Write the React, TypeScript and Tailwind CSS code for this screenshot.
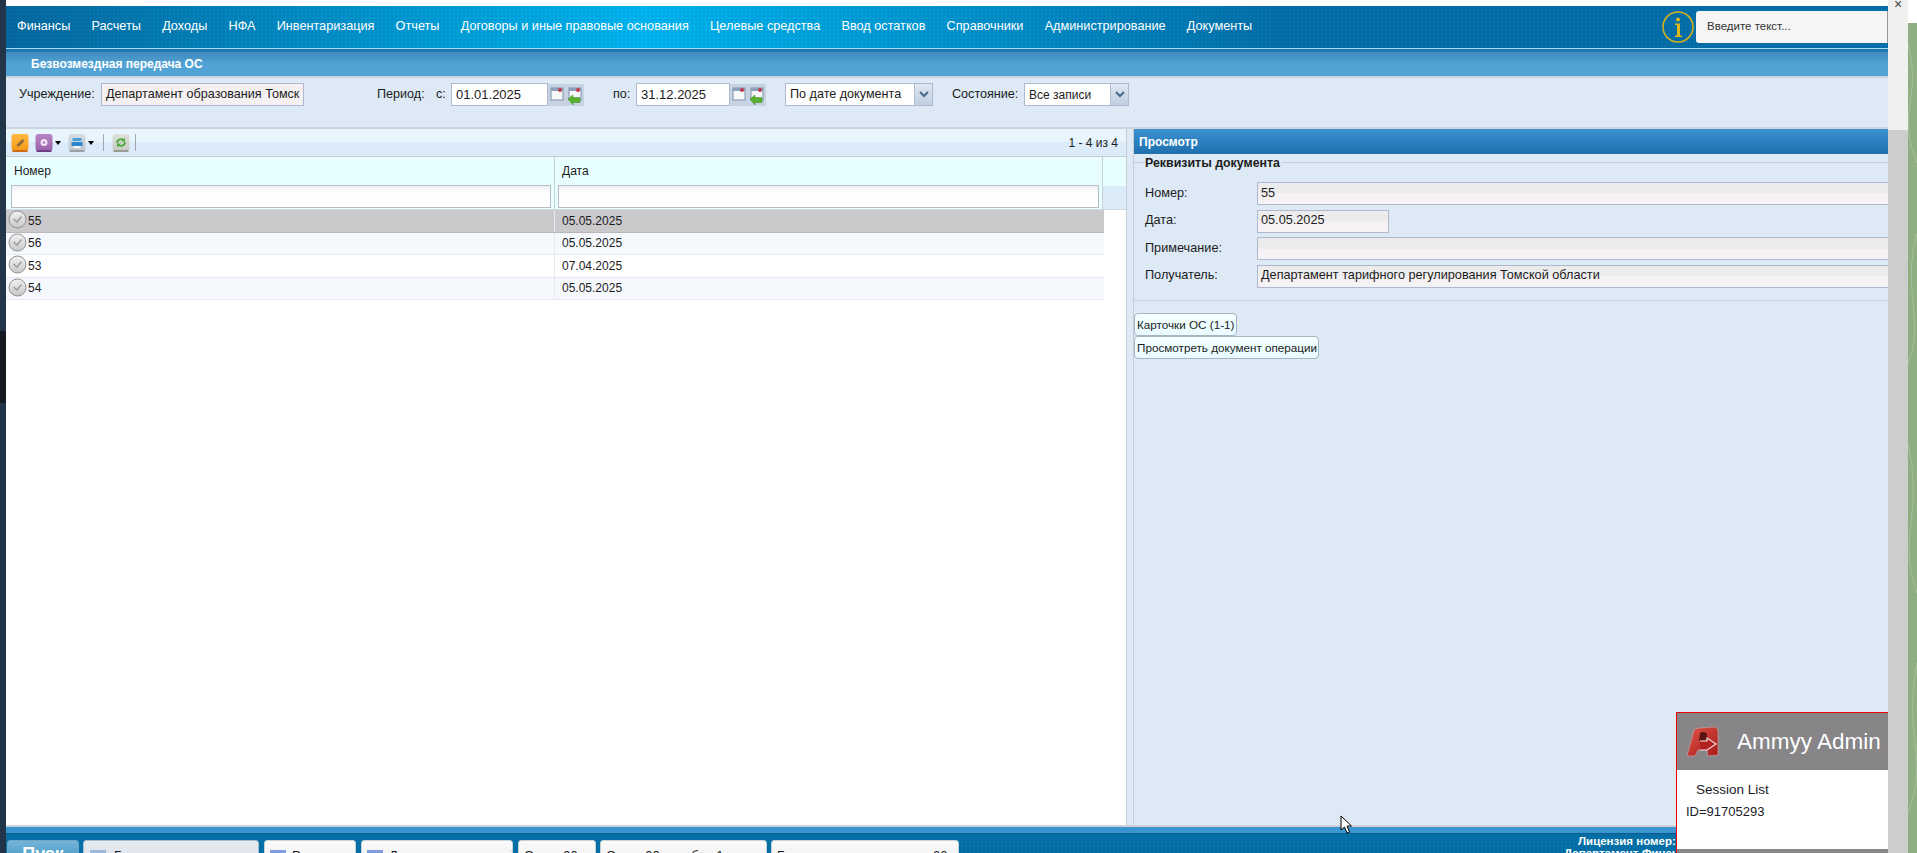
import React from 'react';

const menuItems = ['Финансы', 'Расчеты', 'Доходы', 'НФА', 'Инвентаризация', 'Отчеты', 'Договоры и иные правовые основания', 'Целевые средства', 'Ввод остатков', 'Справочники', 'Администрирование', 'Документы'];

const rows = [
  { num: '55', date: '05.05.2025', cls: 'bg-[#cbc9cc] border-[#b9b7ba]' },
  { num: '56', date: '05.05.2025', cls: 'bg-[#f5f8fd] border-[#e6eaf0]' },
  { num: '53', date: '07.04.2025', cls: 'bg-white border-[#e6eaf0]' },
  { num: '54', date: '05.05.2025', cls: 'bg-[#f5f8fd] border-[#e6eaf0]' },
];

// Small calendar button, optionally with the green arrow
const CalendarIcon = ({ arrow }: { arrow?: boolean }) => (
  <svg width="18" height="22" viewBox="0 0 18 22" className="shrink-0">
    <rect width="18" height="22" fill="#c6d3e2" />
    <rect x="3" y="4" width="12" height="12" fill="#f6f8fb" stroke="#7e90aa" />
    <rect x="3" y="4" width="12" height="3" fill="#8aa0bd" />
    <circle cx="12" cy="6" r="2" fill="#c0394a" />
    {arrow && <path d="M2 15l5-4v2.500h7v5H7V21z" fill="#58b030" stroke="#3f8a20" strokeWidth="0.5" />}
  </svg>
);

const ComboArrow = () => (
  <span className="w-[18px] h-full shrink-0 bg-gradient-to-b from-[#dfe8f2] to-[#c0cfe0] border-l border-[#b0bccf] flex items-center justify-center">
    <svg width="10" height="7" viewBox="0 0 10 7"><path d="M1 1l4 4 4-4" fill="none" stroke="#4a6a8a" strokeWidth="2" /></svg>
  </span>
);

const RowCheck = () => (
  <svg width="19" height="19" viewBox="0 0 19 19" className="shrink-0 -mt-[2px]">
    <defs>
      <linearGradient id="rowcheck" x1="0" y1="0" x2="0" y2="1">
        <stop offset="0" stopColor="#f2f2f2" />
        <stop offset="1" stopColor="#c8c8c8" />
      </linearGradient>
    </defs>
    <circle cx="9.500" cy="9.500" r="8.500" fill="url(#rowcheck)" stroke="#8e8e8e" />
    <path d="M5.500 9l3.500 3L13.500 6.500" fill="none" stroke="#a0a0a0" strokeWidth="1.600" />
  </svg>
);

const ToolBtn = ({ from, to, edge, children }: { from: string; to: string; edge: string; children: React.ReactNode }) => (
  <svg width="18" height="18" viewBox="0 0 17 18" className="shrink-0">
    <defs>
      <linearGradient id={from} x1="0" y1="0" x2="0" y2="1">
        <stop offset="0" stopColor={from} />
        <stop offset="1" stopColor={to} />
      </linearGradient>
    </defs>
    <rect x="0" y="0" width="17" height="17" rx="3" fill={`url(#${from})`} />
    <rect x="1" y="16" width="15" height="2" fill={edge} />
    {children}
  </svg>
);

const DropCaret = () => <span className="w-0 h-0 ml-[2px] border-x-[3px] border-x-transparent border-t-[4px] border-t-black" />;

const Field = ({ label, value, className }: { label: string; value?: string; className: string }) => (
  <div className="flex items-center text-[12.700px]">
    <span className="w-[123px] pl-[11px] shrink-0">{label}</span>
    <div className={`h-[23px] pl-[3px] flex items-center border border-[#b0b8d0] bg-gradient-to-b from-[#ececec] from-50% to-[#f6f1f5] to-50% ${className}`}>{value}</div>
  </div>
);

export default function App() {
  return (
    <div className="w-[1917px] h-[853px] flex overflow-hidden relative font-['Liberation_Sans',sans-serif] text-[12px] text-[#1c1c1c] bg-white">
      <div className="w-[6px] shrink-0 flex flex-col">
        <div className="h-[331px] bg-[#223549]" />
        <div className="h-[72px] bg-[#15191f]" />
        <div className="flex-1 bg-[#22344a]" />
      </div>

      <div className="w-[1882px] shrink-0 flex flex-col">
        <div className="h-[6px] bg-white" />

        {/* top menu */}
        <div className="h-[42px] flex items-center bg-[radial-gradient(rgba(0,40,80,0.10)_1px,transparent_1px),linear-gradient(90deg,#05699f,#00b5f0_34%,#046fa8_68%)] bg-[length:4px_4px,auto] text-white text-[12.700px]">
          <div className="flex items-center gap-[21.200px] pl-[11px]">
            {menuItems.map((m) => <span key={m} className="whitespace-nowrap">{m}</span>)}
          </div>
          <div className="ml-auto flex items-center">
            <svg width="32" height="32" viewBox="0 0 32 32" className="shrink-0">
              <circle cx="16" cy="16" r="15" fill="none" stroke="#d8b21a" strokeWidth="1.500" />
              <circle cx="16" cy="8.500" r="2" fill="#e0b818" />
              <path d="M13 12.500h5v12h2v1.500h-7v-1.500h2v-10.500h-2z" fill="#e0b818" />
            </svg>
            <div className="w-[192px] h-[32px] ml-[2px] bg-[#f5f5f5] rounded-l-[3px] flex items-center pl-[11px] text-[#333] text-[11.500px] border-r border-[#999]">Введите текст...</div>
          </div>
        </div>
        <div className="h-[1px] bg-[#a8d8f0]" />
        <div className="h-[3px] bg-[#1f78b0]" />

        {/* page title */}
        <div className="h-[24px] pl-[25px] flex items-center bg-gradient-to-b from-[#3f8abd] via-[#52a3d5] via-50% to-[#52a3d5] text-white font-bold text-[12px]">Безвозмездная передача ОС</div>
        <div className="h-[2px] bg-[#cfd4da]" />

        {/* filters */}
        <div className="h-[49px] bg-[#dde9f5] pt-[5px] flex items-start">
          <div className="h-[23px] flex items-center text-[12.600px]">
            <span className="ml-[13px] w-[82px]">Учреждение:</span>
            <div className="w-[203px] h-[23px] pl-[4px] flex items-center border border-[#b0b8d0] bg-[#f5f0f2] whitespace-nowrap overflow-hidden">Департамент образования Томск</div>
            <span className="ml-[73px] w-[59px]">Период:</span>
            <span className="w-[15px]">с:</span>
            <div className="w-[97px] h-[23px] pl-[4px] flex items-center bg-white border border-[#b0b8d0] text-[13px]">01.01.2025</div>
            <CalendarIcon />
            <CalendarIcon arrow />
            <span className="ml-[29px] w-[23px]">по:</span>
            <div className="w-[94px] h-[23px] pl-[4px] flex items-center bg-white border border-[#b0b8d0] text-[13px]">31.12.2025</div>
            <CalendarIcon />
            <CalendarIcon arrow />
            <div className="w-[148px] h-[23px] ml-[19px] pl-[4px] flex items-center justify-between bg-white border border-[#b0b8d0]">По дате документа<ComboArrow /></div>
            <span className="ml-[19px] w-[72px]">Состояние:</span>
            <div className="w-[105px] h-[23px] pl-[4px] flex items-center justify-between bg-white border border-[#b0b8d0] text-[12px]">Все записи<ComboArrow /></div>
          </div>
        </div>
        <div className="h-[2px] bg-[#cfd4da]" />

        <div className="flex-1 min-h-0 flex">
          {/* list */}
          <div className="w-[1120px] shrink-0 bg-white flex flex-col">
            <div className="h-[28px] flex items-center pl-[5px] pr-[8px] bg-gradient-to-b from-[#e9f5fd] from-50% to-[#dcebfa] to-50% border-b border-[#c6cdd6]">
              <ToolBtn from="#ffb83c" to="#f59a1c" edge="#d06a10"><path d="M5 11l6-6 2 2-6 6z" fill="#8a6a40" /></ToolBtn>
              <span className="ml-[6px] flex items-center">
                <ToolBtn from="#b884c4" to="#9a62aa" edge="#6e3a80"><circle cx="8.500" cy="8.500" r="3.500" fill="#f2e6f5" /><circle cx="8.500" cy="8.500" r="1.200" fill="#a870b8" /></ToolBtn>
                <DropCaret />
              </span>
              <span className="ml-[7px] flex items-center">
                <ToolBtn from="#d8dde2" to="#bfc6cc" edge="#9a9fa5"><rect x="4" y="4" width="9" height="3" fill="#4aa0dc" /><rect x="3" y="8" width="11" height="4" fill="#2a88d0" /><rect x="5" y="12" width="7" height="2" fill="#f4f8fb" /></ToolBtn>
                <DropCaret />
              </span>
              <span className="w-[1px] h-[17px] ml-[9px] bg-[#9fa8b0]" />
              <span className="ml-[8px] flex">
                <ToolBtn from="#dfe2dc" to="#c6cac3" edge="#9a9d96"><path d="M4.500 9a4 4 0 0 1 7-2.500M12.500 8a4 4 0 0 1-7 2.500" fill="none" stroke="#4aa838" strokeWidth="1.800" /><path d="M12.500 3.500v4h-4zM4.500 13.500v-4h4z" fill="#4aa838" /></ToolBtn>
              </span>
              <span className="w-[1px] h-[17px] ml-[5px] bg-[#9fa8b0]" />
              <span className="ml-auto">1 - 4 из 4</span>
            </div>

            <div className="flex h-[53px] bg-[#e8ffff] border-b border-[#d0d8e0]">
              <div className="w-[549px] shrink-0 border-r border-[#c8d0d8] flex flex-col">
                <div className="h-[28px] pl-[8px] flex items-center">Номер</div>
                <div className="mx-[5px] mr-[3px] h-[23px] border border-[#b8bcc4] bg-gradient-to-b from-[#eef2f6] to-white to-40%" />
              </div>
              <div className="w-[548px] shrink-0 border-r border-[#c8d0d8] flex flex-col">
                <div className="h-[28px] pl-[7px] flex items-center">Дата</div>
                <div className="mx-[3px] h-[23px] border border-[#b8bcc4] bg-gradient-to-b from-[#eef2f6] to-white to-40%" />
              </div>
              <div className="flex-1 bg-gradient-to-b from-[#e8ffff] from-55% to-[#dcebf8] to-55%" />
            </div>

            {rows.map((r) => (
              <div key={r.num} className={`w-[1098px] h-[22.500px] flex items-center border-b ${r.cls}`}>
                <div className="w-[549px] h-full shrink-0 flex items-center pl-[2px] gap-[1px] border-r border-[#e6eaf0]"><RowCheck />{r.num}</div>
                <div className="pl-[7px]">{r.date}</div>
              </div>
            ))}
          </div>

          <div className="w-[8px] shrink-0 bg-[#dde9f5] border-l border-r border-[#c6cdd6]" />

          {/* preview panel */}
          <div className="flex-1 min-w-0 bg-[#dde9f5] flex flex-col">
            <div className="h-[25px] pl-[5px] flex items-center bg-gradient-to-b from-[#3a92d2] to-[#1f6fae] text-white font-bold shrink-0">Просмотр</div>
            <div className="relative mt-[8px] h-[139px] border-t border-b border-[#c8ced6] flex flex-col gap-[4.500px] pt-[19px] shrink-0">
              <span className="absolute left-[10px] -top-[6px] bg-[#dde9f5] px-[1px] font-bold leading-[13px] text-[12.400px]">Реквизиты документа</span>
              <Field label="Номер:" value="55" className="flex-1 border-r-0" />
              <Field label="Дата:" value="05.05.2025" className="w-[132px]" />
              <Field label="Примечание:" className="flex-1 border-r-0" />
              <Field label="Получатель:" value="Департамент тарифного регулирования Томской области" className="flex-1 border-r-0" />
            </div>
            <div className="mt-[12px] flex flex-col items-start text-[11.700px]">
              <button className="h-[23px] w-[103px] pl-[2px] text-left whitespace-nowrap border border-[#a8b4c0] rounded-[4px] bg-gradient-to-b from-[#f4ffff] to-[#e8fbff]">Карточки ОС (1-1)</button>
              <button className="h-[23px] w-[185px] pl-[2px] text-left whitespace-nowrap border border-[#a8b4c0] rounded-[4px] bg-gradient-to-b from-[#f4ffff] to-[#e8fbff]">Просмотреть документ операции</button>
            </div>
          </div>
        </div>

        {/* bottom */}
        <div className="h-[2px] bg-[#cfd0d8]" />
        <div className="h-[6px] bg-[#3a94cf]" />
        <div className="h-[1px] bg-[#0a5a8c]" />
        <div className="h-[19px] bg-[#0571a8] bg-[radial-gradient(rgba(0,40,80,0.10)_1px,transparent_1px)] bg-[length:4px_4px] overflow-hidden flex items-start pt-[6px] pl-[1px] text-[13px]">
          <div className="w-[72px] h-[30px] rounded-t-[3px] border border-[#6aa8c8] bg-gradient-to-b from-[#74b4d6] to-[#2f8cc0] text-white font-bold text-center text-[18px] leading-[20px] pt-[3px] shrink-0">Пуск</div>
          <div className="w-[176px] h-[30px] ml-[4px] rounded-t-[3px] border border-[#a8bccc] bg-gradient-to-b from-[#e6eaf0] to-[#dce2ec] flex pl-[6px] pt-[9px] gap-[8px] shrink-0"><span className="w-[16px] h-[16px] shrink-0 bg-[#9cb8dc]" /><span className="-mt-[4px]">Главная</span></div>
          {[
            ['w-[92px] ml-[5px]', 'Расчеты'],
            ['w-[152px] ml-[5px]', 'Документы операций 00'],
            ['w-[78px] ml-[5px]', 'Отчет 00'],
            ['w-[167px] ml-[4px]', 'Отчет 00 декабрь 1'],
            ['w-[188px] ml-[4px]', 'Безвозмездная передача 00'],
          ].map(([cls, text], i) => (
            <div key={text} className={`h-[30px] rounded-t-[3px] border border-[#c8d0d8] bg-gradient-to-b from-[#fafafa] to-[#eeeef0] flex pl-[5px] pt-[9px] gap-[6px] shrink-0 whitespace-nowrap overflow-hidden ${cls}`}>
              {i < 2 && <span className="w-[16px] h-[16px] shrink-0 bg-[#7f9fdc]" />}<span className="-mt-[4px]">{text}</span>
            </div>
          ))}
          <div className="ml-[605px] -mt-[6px] text-white font-bold text-[11.500px] leading-[11px] whitespace-nowrap">
            <div className="pl-[14px] pt-[2px]">Лицензия номер: 1100</div>
            <div className="pt-[1px]">Департамент Финансов</div>
          </div>
        </div>
      </div>

      {/* browser scrollbar */}
      <div className="w-[20px] shrink-0 bg-[#f0f0f0] flex flex-col">
        <div className="h-[130px] relative">
          <span className="absolute left-[6px] -top-[6px] text-[14px] text-[#444]">×</span>
        </div>
        <div className="flex-1 bg-[#cdcdcd]" />
      </div>

      {/* desktop behind */}
      <div className="flex-1 flex flex-col">
        <div className="h-[23px] bg-white" />
        <svg className="flex-1 w-full bg-[#8fae82]" viewBox="0 0 9 830" preserveAspectRatio="none">
          <path d="M0 20q8 30 2 60t7 60M9 210q-9 30-4 70t-5 60M0 420q9 40 3 80t6 70M9 640q-8 40-2 80t-7 70" fill="none" stroke="#a8c09c" strokeWidth="1" />
        </svg>
      </div>

      {/* Ammyy Admin overlay */}
      <div className="absolute left-[1676px] top-[712px] w-[212px] h-[141px] bg-white border-l border-t border-[#f00000] flex flex-col">
        <div className="h-[57px] bg-[#878588] flex items-center pl-[9px] shrink-0">
          <svg width="33" height="31" viewBox="0 0 33 31" className="shrink-0">
            <defs>
              <linearGradient id="amy" x1="0" y1="0" x2="1" y2="1">
                <stop offset="0" stopColor="#e0564a" />
                <stop offset="1" stopColor="#a81818" />
              </linearGradient>
            </defs>
            <path d="M8 4 Q10 2 14 2 L27 1 Q32 1 32 6 L32 29 L22 30 L21 24 L12 24 L9 30 L1 30 Z" fill="url(#amy)" stroke="#c9a0a0" strokeWidth="0.700" />
            <path d="M14 8 Q14 6 17 6 Q21 6 21 9 L21 14 L13 15 Z" fill="#5a1212" />
            <path d="M14 15 L21 15 V12 L30 18 L21 24 H14" fill="#b02020" stroke="#f2dcdc" strokeWidth="1.200" />
          </svg>
          <span className="ml-[18px] text-white text-[22.500px] whitespace-nowrap">Ammyy Admin</span>
        </div>
        <div className="pl-[19px] pt-[12px] text-[13.500px] text-[#1a1a2a] leading-[16px]">Session List</div>
        <div className="pl-[9px] pt-[6px] text-[13px] text-[#1a1a2a] leading-[16px]">ID=91705293</div>
        <div className="mt-auto h-[4px] bg-[#878588]" />
      </div>

      {/* mouse cursor */}
      <svg width="12" height="19" viewBox="0 0 12 19" className="absolute left-[1340px] top-[815px]">
        <path d="M1 1v14l3.500-3 2.500 6 2.500-1-2.500-6h4.500z" fill="#fff" stroke="#000" />
      </svg>
    </div>
  );
}
